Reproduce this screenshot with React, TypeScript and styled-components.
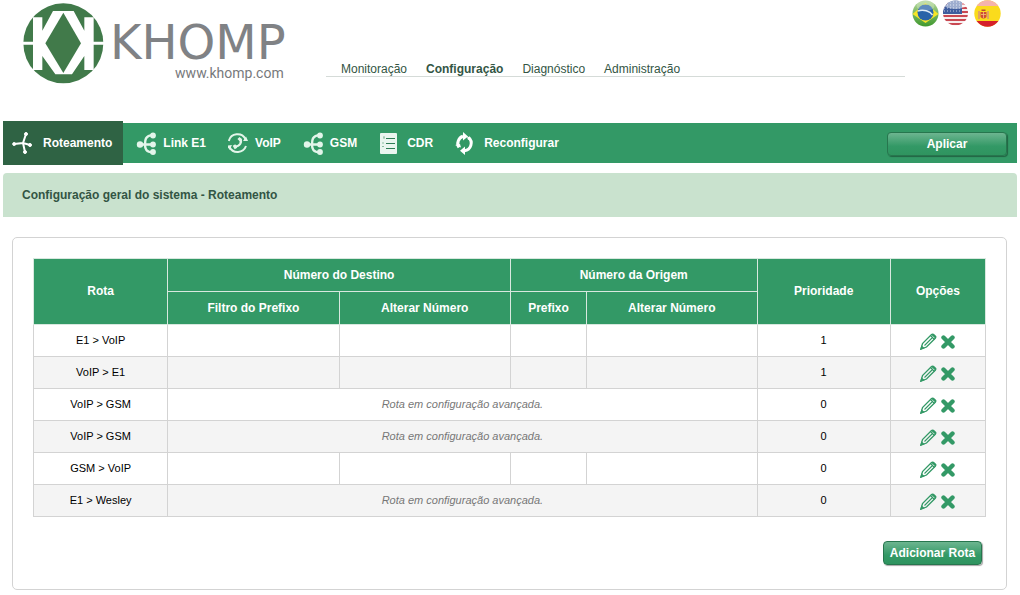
import React from 'react';
import styled, { createGlobalStyle, css } from 'styled-components';

const green = '#339966';
const darkGreen = '#2f6344';
const line = '#d3d3d3';

const GlobalStyle = createGlobalStyle`
  * { box-sizing: border-box; }
  body {
    margin: 0;
    background: #fff;
    font-family: "Liberation Sans", Arial, sans-serif;
    font-size: 12px;
    color: #000;
  }
`;

const Page = styled.div`
  padding: 0 3px 4px;
`;

const Header = styled.header`
  display: flex;
  align-items: flex-start;
  height: 121px;
  padding: 3px 16px 0 20px;
`;

const Logo = styled.a`
  display: flex;
  gap: 6px;
  width: 303px;
  flex: none;
  text-decoration: none;
`;

const Wordmark = styled.span`
  display: flex;
  flex-direction: column;
  align-items: flex-end;
  padding-top: 16px;
`;

const BrandName = styled.span`
  font-family: "DejaVu Sans", sans-serif;
  font-size: 48px;
  line-height: 46px;
  color: #808285;
`;

const BrandUrl = styled.span`
  font-family: Roboto, sans-serif;
  font-size: 14px;
  line-height: 16px;
  padding-right: 2px;
  color: #77797c;
`;

const MainNav = styled.nav`
  display: flex;
  gap: 19px;
  width: 579px;
  height: 74px;
  align-items: flex-end;
  padding: 0 15px;
  border-bottom: 1px solid #d5dbd8;
`;

const NavLink = styled.a<{ $current?: boolean }>`
  line-height: 14px;
  color: #335544;
  text-decoration: none;
  font-weight: ${(p) => (p.$current ? 'bold' : 'normal')};
`;

const Flags = styled.div`
  display: flex;
  gap: 4px;
  margin-left: auto;
`;

const FlagButton = styled.button`
  width: 27px;
  height: 27px;
  padding: 0;
  border: 0;
  background: none;
  margin-top: -3px;
  cursor: pointer;
  svg { display: block; }
`;

const Toolbar = styled.nav`
  display: flex;
  align-items: center;
  height: 44px;
  background: linear-gradient(#fff 2px, ${green} 2px, ${green} 42px, #fff 42px);
  padding-right: 10px;
`;

const Tool = styled.a<{ $active?: boolean }>`
  display: flex;
  align-items: center;
  gap: 6px;
  height: 44px;
  padding: 0 9px 0 13px;
  color: #fff;
  font-weight: bold;
  text-decoration: none;
  ${(p) =>
    p.$active &&
    css`
      gap: 10px;
      padding-left: 9px;
      padding-right: 11px;
      background: ${darkGreen};
    `}
`;

const GreenButton = styled.button<{ $wide?: boolean }>`
  min-width: ${(p) => (p.$wide ? '120px' : '99px')};
  height: 24px;
  padding: 0 5px;
  border: 1px solid #27764e;
  border-radius: 4px;
  background: linear-gradient(#6db590, ${green} 60%, #2f945f);
  box-shadow: 1px 1px 1px rgba(0, 0, 0, 0.35);
  color: #fff;
  font: bold 12px "Liberation Sans", Arial, sans-serif;
  white-space: nowrap;
  cursor: pointer;
`;

const ToolbarEnd = styled.div`
  margin-left: auto;
  padding-top: 2px;
`;

const Title = styled.h1`
  margin: 8px 0 0;
  padding: 0 19px;
  background: #c9e2ce;
  border-radius: 4px 4px 0 0;
  color: #335544;
  font-size: 12px;
  line-height: 44px;
`;

const Panel = styled.main`
  margin: 20px 10px 0 9px;
  padding: 20px 20px 24px;
  border: 1px solid ${line};
  border-radius: 5px;
`;

const Table = styled.table`
  width: 100%;
  table-layout: fixed;
  border-collapse: collapse;
  text-align: center;
`;

const HeadCell = styled.th`
  height: 33px;
  padding: 0 0 1px;
  border: 1px solid #d8e8df;
  background: ${green};
  color: #fff;
  font-size: 12px;
`;

const Row = styled.tr`
  &:nth-child(even) { background: #f4f4f4; }
`;

const Cell = styled.td`
  height: 32px;
  padding: 0 0 2px;
  border: 1px solid ${line};
  font-size: 11px;
`;

const Advanced = styled(Cell)`
  color: #777;
  font-style: italic;
`;

const Actions = styled.div`
  display: flex;
  justify-content: center;
  gap: 4px;
  padding-top: 3px;
`;

const IconButton = styled.button`
  padding: 0;
  border: 0;
  background: none;
  cursor: pointer;
  svg { display: block; }
`;

const PanelFooter = styled.div`
  display: flex;
  justify-content: flex-end;
  margin-top: 24px;
  padding-right: 4px;
`;

const Mark = () => (
  <svg width="81" height="81" viewBox="67 9 243 243" aria-hidden="true">
    <circle cx="188" cy="130" r="120" fill="#417a4a" />
    <path fill="#fff" d="M97 52H125V92L157 33H219L251 92V52H279V125H310V134H279V210H251V168L214 223H164L125 168V210H97V134H67V125H97Z" />
    <path fill="#417a4a" d="M188 38L241 130L188 219L134 130Z" />
  </svg>
);

const Brazil = () => (
  <svg width="27" height="27" viewBox="0 0 27 27" aria-hidden="true">
    <defs>
      <linearGradient id="br" x2="0" y2="1"><stop offset="0" stopColor="#b5d79a" /><stop offset="1" stopColor="#3e982d" /></linearGradient>
    </defs>
    <circle cx="13.5" cy="13.5" r="13" fill="url(#br)" />
    <path d="M0.500 14L13.5 3L26.500 14L13.5 23Z" fill="#f7e527" />
    <circle cx="13.5" cy="12.5" r="8" fill="#2863a8" />
    <path d="M6 11C11 9 18 11 20.500 15" fill="none" stroke="#dceaf5" strokeWidth="1.500" />
    <ellipse cx="13.5" cy="6" rx="9" ry="5" fill="#fff" opacity="0.25" />
  </svg>
);

const Usa = () => (
  <svg width="27" height="27" viewBox="1 0 27 27" aria-hidden="true">
    <clipPath id="usClip"><circle cx="13.5" cy="13" r="12.500" /></clipPath>
    <g clipPath="url(#usClip)">
      <rect width="27" height="27" fill="#f7eeee" />
      {[3, 7, 11, 15, 19, 23].map((y) => (
        <rect key={y} y={y} width="27" height="2" fill="#c94852" />
      ))}
      <rect width="20" height="14" fill="#3f5d9e" />
      {[2, 5, 8, 11].map((y) => (
        <path key={y} d={`M2 ${y}H20`} stroke="#c3cde5" strokeWidth="1" strokeDasharray="1 2" />
      ))}
      <ellipse cx="13.5" cy="3" rx="13" ry="6" fill="#fff" opacity="0.5" />
    </g>
  </svg>
);

const Spain = () => (
  <svg width="27" height="27" viewBox="0 0 27 27" aria-hidden="true">
    <clipPath id="esClip"><circle cx="13.5" cy="13.5" r="13.200" /></clipPath>
    <g clipPath="url(#esClip)">
      <rect width="27" height="27" fill="#fadb1c" />
      <rect width="27" height="6" fill="#f5b3ac" />
      <rect y="21" width="27" height="6" fill="#d5202b" />
      <path d="M5 11V19M14 11V19" stroke="#d9927a" strokeWidth="1.500" />
      <path d="M6.500 12H12.500V17Q9.500 20 6.500 17Z" fill="#cf4a36" />
      <path d="M7.500 9.500H11.500V11H7.500Z" fill="#b84a2e" />
      <path d="M9.500 12V18M7 14.500H12" stroke="#f3c27b" strokeWidth="0.800" />
    </g>
  </svg>
);

const RoutingIcon = () => (
  <svg width="21" height="24" viewBox="0 0 21 24" fill="#fff" stroke="#fff" aria-hidden="true">
    <path d="M2 13L11 12L14 3M11 12L18 14M11 12L13 21" fill="none" strokeWidth="2" />
    <circle cx="2.200" cy="13" r="1.500" /><circle cx="14" cy="3" r="1.500" />
    <circle cx="18" cy="14" r="1.500" /><circle cx="13" cy="21" r="1.500" />
  </svg>
);

const BranchIcon = () => (
  <svg width="21" height="24" viewBox="0 0 21 24" fill="#e3f5ea" aria-hidden="true">
    <path d="M4 13.500H17M17 4C9 4.500 9 9.500 9 13.500C9 18 10 21 17 21.500" fill="none" stroke="#e3f5ea" strokeWidth="2.400" />
    <circle cx="4" cy="13.500" r="3.200" /><circle cx="17" cy="4.500" r="2.900" />
    <circle cx="17" cy="13.500" r="2.900" /><circle cx="17" cy="21" r="2.900" />
  </svg>
);

const VoipIcon = () => (
  <svg width="21" height="22" viewBox="1 0 21 22" fill="none" stroke="#e3f5ea" aria-hidden="true">
    <path d="M1.800 9A9 9 0 0 1 18.500 7M19 14A9 9 0 0 1 2.500 15" strokeWidth="2" />
    <path d="M0 13.500L5 13L2.500 18Z" fill="#e3f5ea" stroke="none" />
    <path d="M21 9L16 9L19 4.500Z" fill="#e3f5ea" stroke="none" />
    <path d="M13 6.500C15.500 10 13 15 7 14.500" strokeWidth="2.200" />
    <path d="M11.500 6L14 8.500M7 13L9 16.500" strokeWidth="3" />
  </svg>
);

const ListIcon = () => (
  <svg width="22" height="22" viewBox="0 0 22 22" aria-hidden="true">
    <rect x="1" y="1" width="17" height="21" rx="1" fill="#eaf6ef" />
    <path d="M7 6.500H16M7 11.500H16M7 16.500H16" stroke="#2f7d55" strokeWidth="1.200" />
    <path d="M4 6H6M3 11H5M3 14.500H5M5 4V6" stroke="#8bbd9f" strokeWidth="1" />
  </svg>
);

const ReloadIcon = () => (
  <svg width="23" height="24" viewBox="1 0 23 24" aria-hidden="true">
    <path d="M5 16.500A7.500 7.500 0 0 1 9 5.300M14.500 6.500A7.500 7.500 0 0 1 10.500 19.700" fill="none" stroke="#fff" strokeWidth="3" />
    <path d="M9 1L14 5.500L9 9.500ZM11 15.500V24L6 19.700Z" fill="#fff" />
    <path d="M1 14L6 13L7 16.500ZM13 5L17 7.500L14 9Z" fill="#fff" />
  </svg>
);

const PencilIcon = () => (
  <svg width="17" height="17" viewBox="0 0 17 17" fill="none" stroke={green} strokeWidth="1.300" aria-hidden="true">
    <path d="M1 16L2.500 10.500L11.500 1.500C13 0.500 16.500 3.500 15.500 5L6.500 14Z" />
    <path d="M4.500 12.500L13 4M10.500 2.500L14.500 6.500" strokeWidth="1.100" />
    <path d="M12.500 1.500L15.800 4.500" strokeWidth="2.200" />
    <path d="M1 16L1.800 13.500L3.500 15Z" fill={green} />
  </svg>
);

const CrossIcon = () => (
  <svg width="14" height="17" viewBox="0 0 14 17" aria-hidden="true">
    <path d="M2.500 4.500L11.500 13.500M11.500 4.500L2.500 13.500" stroke={green} strokeWidth="4.400" strokeLinecap="round" />
  </svg>
);

const tools = [
  { label: 'Roteamento', Icon: RoutingIcon, active: true },
  { label: 'Link E1', Icon: BranchIcon },
  { label: 'VoIP', Icon: VoipIcon },
  { label: 'GSM', Icon: BranchIcon },
  { label: 'CDR', Icon: ListIcon },
  { label: 'Reconfigurar', Icon: ReloadIcon },
];

const routes = [
  { name: 'E1 > VoIP', priority: 1, advanced: false },
  { name: 'VoIP > E1', priority: 1, advanced: false },
  { name: 'VoIP > GSM', priority: 0, advanced: true },
  { name: 'VoIP > GSM', priority: 0, advanced: true },
  { name: 'GSM > VoIP', priority: 0, advanced: false },
  { name: 'E1 > Wesley', priority: 0, advanced: true },
];

const columns = ['14.1%', '18%', '18%', '8%', '17.9%', '14%', '10%'];

export default function App() {
  return (
    <Page>
      <GlobalStyle />
      <Header>
        <Logo href="#">
          <Mark />
          <Wordmark>
            <BrandName>KHOMP</BrandName>
            <BrandUrl>www.khomp.com</BrandUrl>
          </Wordmark>
        </Logo>
        <MainNav>
          <NavLink href="#">Monitoração</NavLink>
          <NavLink href="#" $current>Configuração</NavLink>
          <NavLink href="#">Diagnóstico</NavLink>
          <NavLink href="#">Administração</NavLink>
        </MainNav>
        <Flags>
          <FlagButton aria-label="Português"><Brazil /></FlagButton>
          <FlagButton aria-label="English"><Usa /></FlagButton>
          <FlagButton aria-label="Español"><Spain /></FlagButton>
        </Flags>
      </Header>

      <Toolbar>
        {tools.map(({ label, Icon, active }) => (
          <Tool key={label} href="#" $active={active}>
            <Icon />
            {label}
          </Tool>
        ))}
        <ToolbarEnd>
          <GreenButton $wide>Aplicar</GreenButton>
        </ToolbarEnd>
      </Toolbar>

      <Title>Configuração geral do sistema - Roteamento</Title>

      <Panel>
        <Table>
          <colgroup>
            {columns.map((width, i) => (
              <col key={i} width={width} />
            ))}
          </colgroup>
          <thead>
            <tr>
              <HeadCell rowSpan={2}>Rota</HeadCell>
              <HeadCell colSpan={2}>Número do Destino</HeadCell>
              <HeadCell colSpan={2}>Número da Origem</HeadCell>
              <HeadCell rowSpan={2}>Prioridade</HeadCell>
              <HeadCell rowSpan={2}>Opções</HeadCell>
            </tr>
            <tr>
              <HeadCell>Filtro do Prefixo</HeadCell>
              <HeadCell>Alterar Número</HeadCell>
              <HeadCell>Prefixo</HeadCell>
              <HeadCell>Alterar Número</HeadCell>
            </tr>
          </thead>
          <tbody>
            {routes.map((route, i) => (
              <Row key={i}>
                <Cell>{route.name}</Cell>
                {route.advanced ? (
                  <Advanced colSpan={4}>Rota em configuração avançada.</Advanced>
                ) : (
                  <>
                    <Cell />
                    <Cell />
                    <Cell />
                    <Cell />
                  </>
                )}
                <Cell>{route.priority}</Cell>
                <Cell>
                  <Actions>
                    <IconButton aria-label={`Editar ${route.name}`}><PencilIcon /></IconButton>
                    <IconButton aria-label={`Remover ${route.name}`}><CrossIcon /></IconButton>
                  </Actions>
                </Cell>
              </Row>
            ))}
          </tbody>
        </Table>
        <PanelFooter>
          <GreenButton>Adicionar Rota</GreenButton>
        </PanelFooter>
      </Panel>
    </Page>
  );
}
